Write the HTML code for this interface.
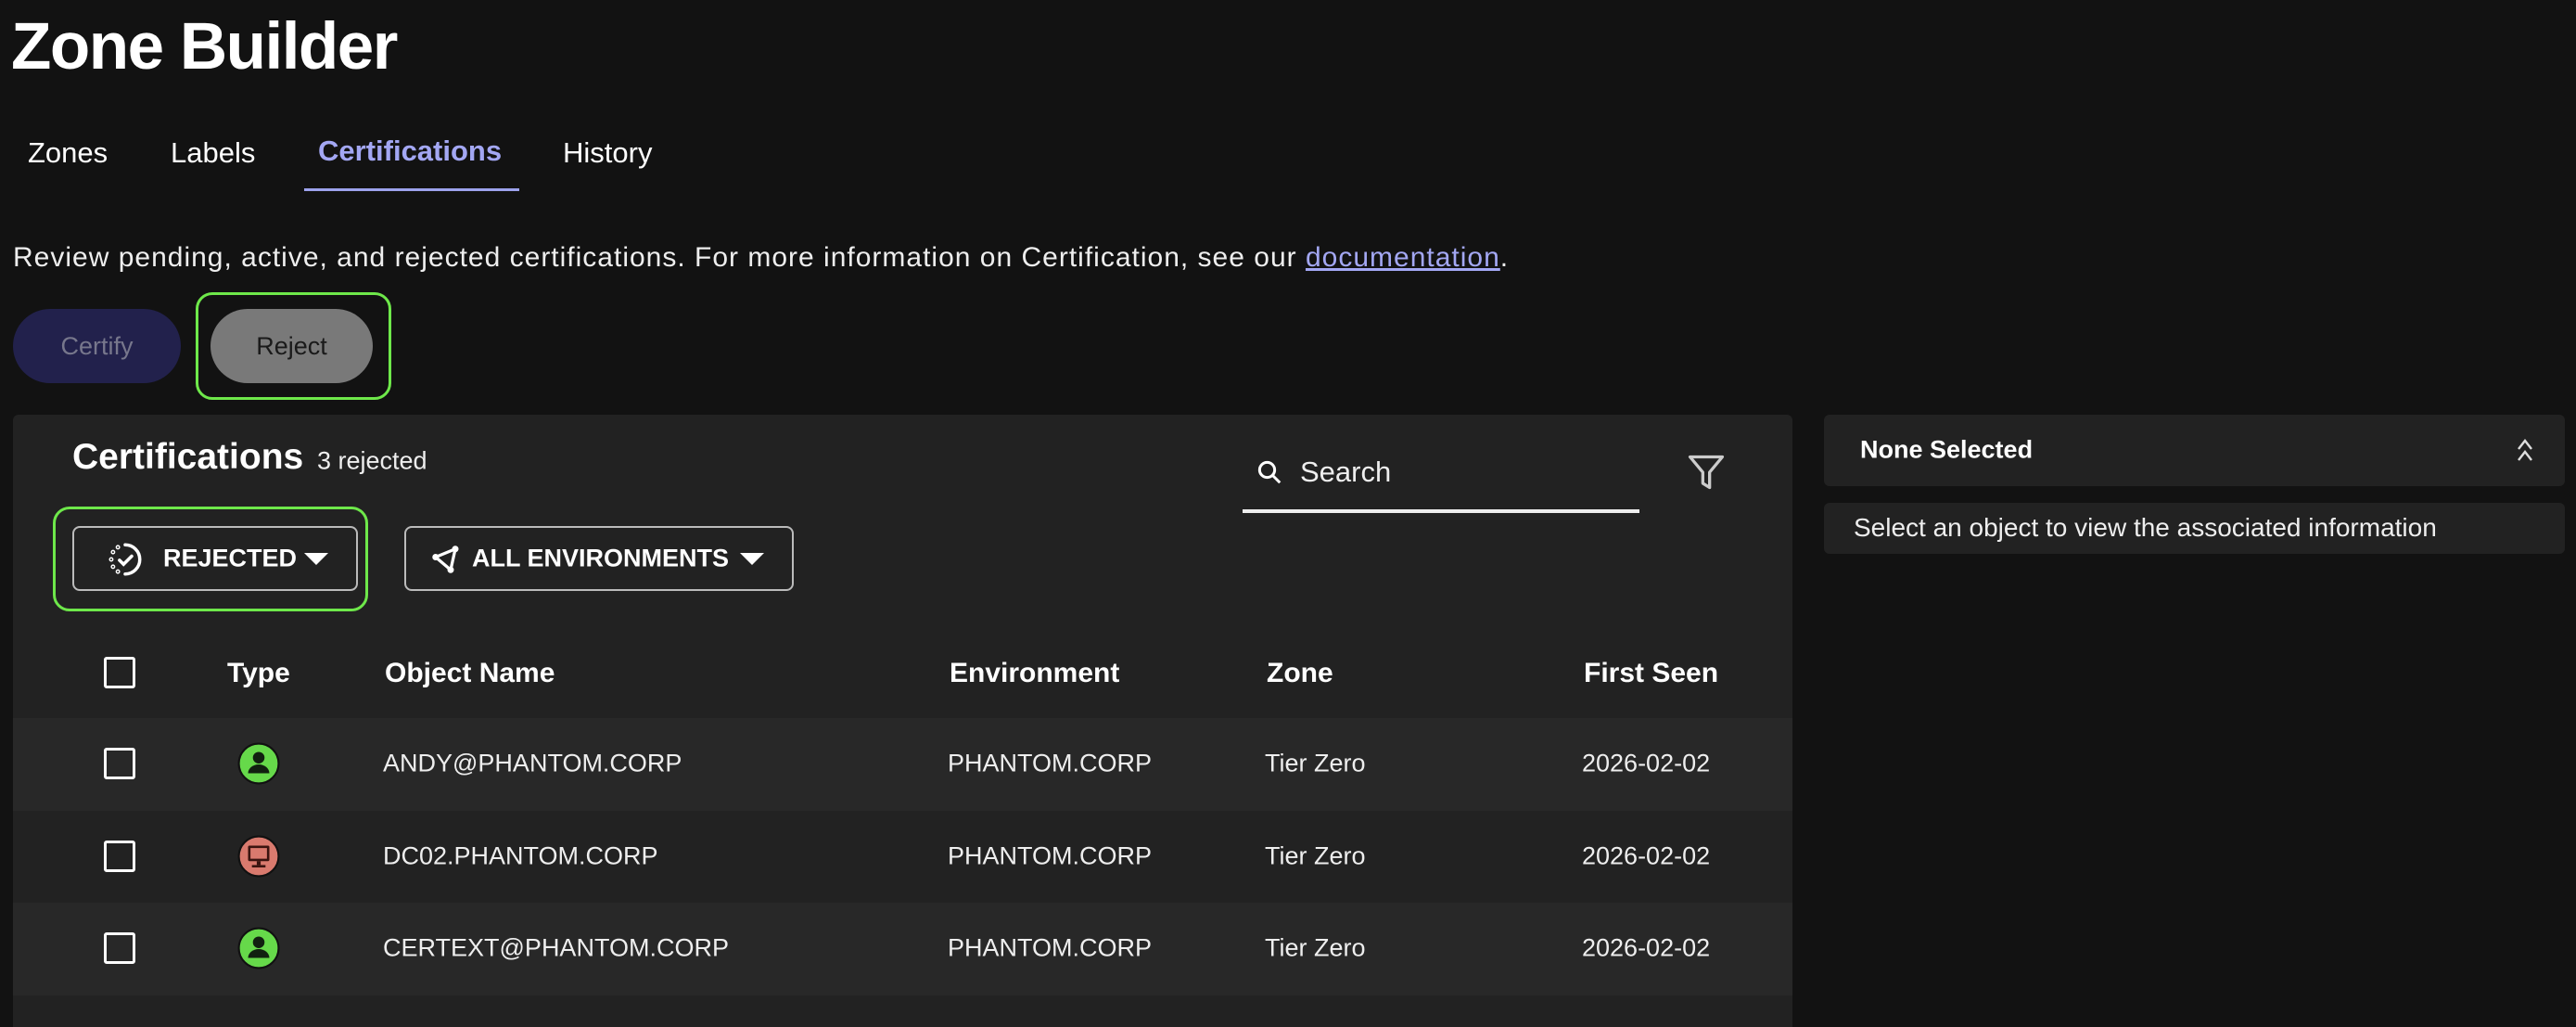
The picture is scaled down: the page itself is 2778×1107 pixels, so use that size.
<!DOCTYPE html>
<html><head><meta charset="utf-8"><style>
*{margin:0;padding:0;box-sizing:border-box}
body{width:2778px;height:1090px;background:#121212;color:#fff;font-family:"Liberation Sans",Arial,sans-serif;position:relative;overflow:hidden}
.a{position:absolute;white-space:nowrap}
.v{transform:translateY(-50%)}
.panel{position:absolute;left:14px;top:447px;width:1919px;height:660px;background:#222;border-radius:6px 6px 0 0}
.row{position:absolute;left:14px;width:1919px;height:100px}
.cb{position:absolute;left:112px;width:34px;height:34px;border:3px solid #fff;border-radius:3px}
.hd{font-size:30px;font-weight:bold}
.td{font-size:27px;color:#eee}
</style></head><body>
<div class="a" style="left:12px;top:10px;font-size:71px;font-weight:bold;letter-spacing:-1.5px">Zone Builder</div>

<div class="a v" style="left:30px;top:165px;font-size:31px">Zones</div>
<div class="a v" style="left:184px;top:165px;font-size:31px">Labels</div>
<div class="a v" style="left:343px;top:163px;font-size:31px;color:#a3a7f3;font-weight:bold">Certifications</div>
<div class="a v" style="left:607px;top:165px;font-size:31px">History</div>
<div class="a" style="left:328px;top:203px;width:232px;height:3px;background:#9da2ec"></div>

<div class="a v" style="left:14px;top:278px;font-size:30px;letter-spacing:1px;color:#eee">Review pending, active, and rejected certifications. For more information on Certification, see our <span style="color:#a3a7f3;text-decoration:underline">documentation</span>.</div>

<div class="a" style="left:14px;top:333px;width:181px;height:80px;border-radius:40px;background:#22214c;color:#77778c;font-size:27px;line-height:80px;text-align:center">Certify</div>
<div class="a" style="left:211px;top:315px;width:211px;height:116px;border:3px solid #6ee84a;border-radius:18px"></div>
<div class="a" style="left:227px;top:333px;width:175px;height:80px;border-radius:40px;background:#797979;color:#1a1a1a;font-size:27px;line-height:80px;text-align:center">Reject</div>

<div class="panel"></div>
<div class="a v" style="left:78px;top:493px;font-size:39px;font-weight:bold">Certifications</div>
<div class="a v" style="left:342px;top:497px;font-size:27px;color:#eee">3 rejected</div>

<div class="a" style="left:57px;top:546px;width:340px;height:113px;border:3px solid #6ee84a;border-radius:18px"></div>
<div class="a" style="left:78px;top:567px;width:308px;height:70px;border:2px solid #bbb;border-radius:8px"></div>
<svg class="a" style="left:114px;top:582px" width="42" height="42" viewBox="0 0 24 24" fill="none" stroke="#fff" stroke-width="2" stroke-linecap="round"><path d="M12 3a9 9 0 0 1 0 18"/><path d="M8.5 12.5l2.5 2.5 5-5"/><circle cx="7.5" cy="4.5" r=".4"/><circle cx="4.5" cy="7.5" r=".4"/><circle cx="3.4" cy="12" r=".4"/><circle cx="4.5" cy="16.5" r=".4"/><circle cx="7.5" cy="19.5" r=".4"/></svg>
<div class="a v" style="left:176px;top:602px;font-size:27px;font-weight:bold">REJECTED</div>
<svg class="a" style="left:328px;top:594px" width="26" height="16"><path d="M0 2h26L13 15z" fill="#fff"/></svg>

<div class="a" style="left:436px;top:567px;width:420px;height:70px;border:2px solid #bbb;border-radius:8px"></div>
<svg class="a" style="left:466px;top:588px" width="30" height="30" viewBox="0 0 24 24" fill="none" stroke="#fff" stroke-width="2.6" stroke-linejoin="round"><path d="M3 10L20 3 16 21z"/><circle cx="3" cy="10" r="1.5" fill="#fff"/><circle cx="20" cy="3" r="1.5" fill="#fff"/><circle cx="16" cy="21" r="1.5" fill="#fff"/></svg>
<div class="a v" style="left:509px;top:602px;font-size:27px;font-weight:bold">ALL ENVIRONMENTS</div>
<svg class="a" style="left:798px;top:594px" width="26" height="16"><path d="M0 2h26L13 15z" fill="#fff"/></svg>

<svg class="a" style="left:1354px;top:494px" width="30" height="30" viewBox="0 0 24 24" fill="none" stroke="#fff" stroke-width="2.4"><circle cx="10" cy="10" r="6.5"/><path d="M15 15l6 6"/></svg>
<div class="a v" style="left:1402px;top:509px;font-size:31px;color:#eee">Search</div>
<div class="a" style="left:1340px;top:549px;width:428px;height:4px;background:#eee"></div>
<svg class="a" style="left:1818px;top:487px" width="44" height="44" viewBox="0 0 24 24" fill="none" stroke="#ccc" stroke-width="1.8" stroke-linejoin="round"><path d="M2.5 3h19l-7.5 9v9l-4-2.5V12z"/></svg>

<div class="cb" style="top:708px"></div>
<div class="a v hd" style="left:245px;top:726px">Type</div>
<div class="a v hd" style="left:415px;top:726px">Object Name</div>
<div class="a v hd" style="left:1024px;top:726px">Environment</div>
<div class="a v hd" style="left:1366px;top:726px">Zone</div>
<div class="a v hd" style="left:1708px;top:726px">First Seen</div>

<div class="row" style="top:774px;background:#282828"></div>
<div class="row" style="top:874px;background:#222"></div>
<div class="row" style="top:973px;background:#282828"></div>

<div class="cb" style="top:806px"></div>
<svg class="a" style="left:256px;top:800px" width="46" height="46" viewBox="0 0 44 44"><circle cx="22" cy="22" r="20.5" fill="#66d94a" stroke="#111" stroke-width="2"/><circle cx="22" cy="16" r="6" fill="#112010"/><path d="M11 32a11 9 0 0 1 22 0z" fill="#112010"/></svg>
<div class="a v td" style="left:413px;top:823px">ANDY@PHANTOM.CORP</div>
<div class="a v td" style="left:1022px;top:823px">PHANTOM.CORP</div>
<div class="a v td" style="left:1364px;top:823px">Tier Zero</div>
<div class="a v td" style="left:1706px;top:823px">2026-02-02</div>

<div class="cb" style="top:906px"></div>
<svg class="a" style="left:256px;top:900px" width="46" height="46" viewBox="0 0 44 44"><circle cx="22" cy="22" r="20.5" fill="#d97a6e" stroke="#111" stroke-width="2"/><rect x="11" y="11" width="22" height="16" rx="1.5" fill="#3a1410"/><rect x="13.5" y="13.5" width="17" height="11" fill="#d97a6e"/><rect x="20" y="27" width="4" height="4" fill="#3a1410"/><rect x="15" y="31" width="14" height="2.5" fill="#3a1410"/></svg>
<div class="a v td" style="left:413px;top:923px">DC02.PHANTOM.CORP</div>
<div class="a v td" style="left:1022px;top:923px">PHANTOM.CORP</div>
<div class="a v td" style="left:1364px;top:923px">Tier Zero</div>
<div class="a v td" style="left:1706px;top:923px">2026-02-02</div>

<div class="cb" style="top:1005px"></div>
<svg class="a" style="left:256px;top:999px" width="46" height="46" viewBox="0 0 44 44"><circle cx="22" cy="22" r="20.5" fill="#66d94a" stroke="#111" stroke-width="2"/><circle cx="22" cy="16" r="6" fill="#112010"/><path d="M11 32a11 9 0 0 1 22 0z" fill="#112010"/></svg>
<div class="a v td" style="left:413px;top:1022px">CERTEXT@PHANTOM.CORP</div>
<div class="a v td" style="left:1022px;top:1022px">PHANTOM.CORP</div>
<div class="a v td" style="left:1364px;top:1022px">Tier Zero</div>
<div class="a v td" style="left:1706px;top:1022px">2026-02-02</div>

<div class="a" style="left:1967px;top:447px;width:799px;height:77px;background:#222;border-radius:6px"></div>
<div class="a v" style="left:2006px;top:485px;font-size:27px;font-weight:bold">None Selected</div>
<svg class="a" style="left:2711px;top:470px" width="24" height="30" viewBox="0 0 24 30" fill="none" stroke="#ddd" stroke-width="2.4"><path d="M5 14l7-9 7 9M5 26l7-9 7 9"/></svg>
<div class="a" style="left:1967px;top:542px;width:799px;height:55px;background:#222;border-radius:6px"></div>
<div class="a v" style="left:1999px;top:569px;font-size:28px;color:#eee">Select an object to view the associated information</div>
</body></html>
